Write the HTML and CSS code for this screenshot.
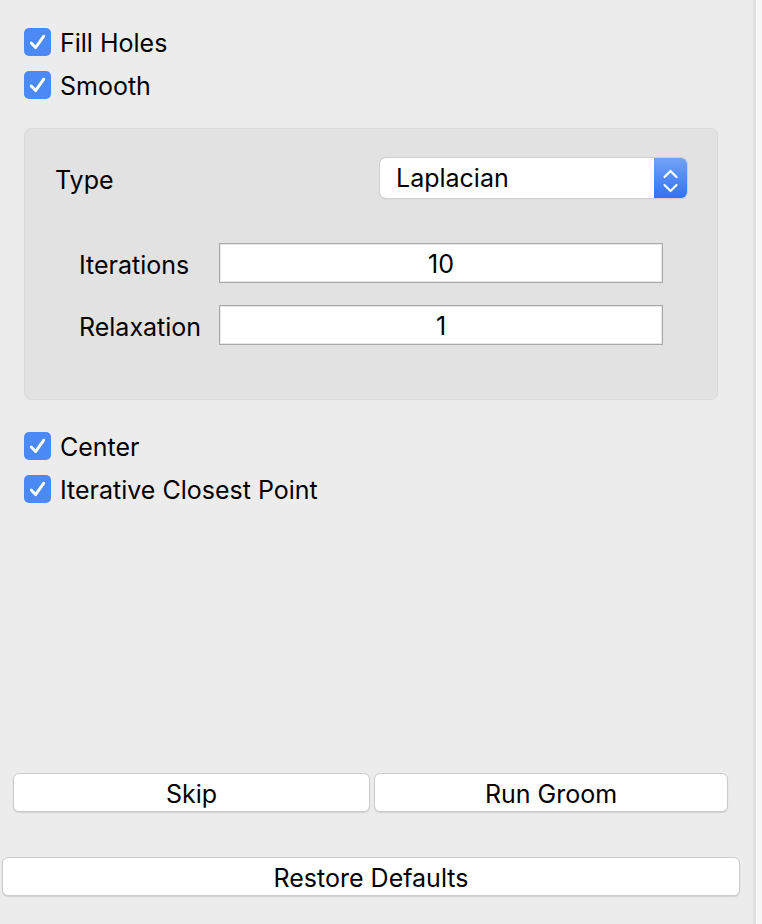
FILE: index.html
```html
<!DOCTYPE html>
<html>
<head>
<meta charset="utf-8">
<link rel="stylesheet" href="styles.css">
</head>
<body>
<div class="page">
  <div class="panel">
    <div class="checks top-checks">
      <label class="check"><span class="box"><svg viewBox="0 0 28 28" width="28" height="28"><path d="M7.5 15 L12 19.8 L20.5 8" /></svg></span><span class="lbl">Fill Holes</span></label>
      <label class="check"><span class="box"><svg viewBox="0 0 28 28" width="28" height="28"><path d="M7.5 15 L12 19.8 L20.5 8" /></svg></span><span class="lbl">Smooth</span></label>
    </div>

    <div class="group">
      <div class="type-row">
        <span class="type-lbl">Type</span>
        <div class="combo">
          <span class="combo-text">Laplacian</span>
          <span class="combo-arrow">
            <svg viewBox="0 0 33 40" width="33" height="40"><path d="M10.5 19 L16.5 13 L22.5 19" /><path d="M10.5 27 L16.5 33 L22.5 27" /></svg>
          </span>
        </div>
      </div>
      <div class="fields">
        <div class="field">
          <span class="field-lbl">Iterations</span>
          <div class="input">10</div>
        </div>
        <div class="field">
          <span class="field-lbl">Relaxation</span>
          <div class="input">1</div>
        </div>
      </div>
    </div>

    <div class="checks mid-checks">
      <label class="check"><span class="box"><svg viewBox="0 0 28 28" width="28" height="28"><path d="M7.5 15 L12 19.8 L20.5 8" /></svg></span><span class="lbl">Center</span></label>
      <label class="check"><span class="box"><svg viewBox="0 0 28 28" width="28" height="28"><path d="M7.5 15 L12 19.8 L20.5 8" /></svg></span><span class="lbl">Iterative Closest Point</span></label>
    </div>

    <div class="spacer"></div>

    <div class="btn-row">
      <button class="btn skip">Skip</button>
      <button class="btn run">Run Groom</button>
    </div>
    <div class="restore-row">
      <button class="btn restore">Restore Defaults</button>
    </div>
  </div>
  <div class="divider"></div>
  <div class="edge"></div>
</div>
</body>
</html>
```

FILE: styles.css
```css
* { box-sizing: border-box; }
html, body { margin: 0; padding: 0; }
body {
  font-family: "Inter", "Liberation Sans", sans-serif;
  font-size: 25px;
  color: #000;
  background: #ececec;
}
.page {
  display: flex;
  height: 924px;
  width: 762px;
}
.panel {
  width: 753px;
  background: #ececec;
  display: flex;
  flex-direction: column;
}
.divider { width: 3px; background: #e2e2e2; }
.edge { flex: 1; background: #f7f7f7; }

.checks {
  display: flex;
  flex-direction: column;
  gap: 15px;
  padding-left: 24px;
}
.top-checks { padding-top: 28px; }
.mid-checks { padding-top: 32px; }
.check {
  display: flex;
  align-items: center;
  height: 28px;
  gap: 9px;
}
.box {
  width: 27px;
  height: 28px;
  border-radius: 5px;
  background: #4b8af4;
  display: flex;
  align-items: center;
  justify-content: center;
}
.box svg path {
  fill: none;
  stroke: #fff;
  stroke-width: 3;
  stroke-linecap: round;
  stroke-linejoin: round;
}
.lbl { line-height: 28px; padding-top: 2px; }

.group {
  margin: 29px 0 0 24px;
  width: 694px;
  height: 272px;
  background: #e2e2e2;
  border: 1px solid #dadada;
  border-radius: 7px;
  padding: 29px 30px 0 30px;
}
.type-row {
  display: flex;
  align-items: center;
  justify-content: space-between;
  height: 40px;
}
.type-lbl { line-height: 36px; padding-top: 4px; }
.combo {
  width: 307px;
  height: 40px;
  background: #fff;
  border-radius: 6px;
  box-shadow: 0 0 0 1px #cfcfcf, 0 1px 1px rgba(0,0,0,0.18);
  display: flex;
  overflow: hidden;
}
.combo-text {
  flex: 1;
  padding-left: 16px;
  line-height: 40px;
}
.combo-arrow {
  width: 33px;
  height: 40px;
  background: linear-gradient(to bottom, #73a3f6, #2f72f4);
}
.combo-arrow svg { display: block; }
.combo-arrow path {
  fill: none;
  stroke: #fff;
  stroke-width: 2.2;
  stroke-linecap: round;
  stroke-linejoin: round;
}

.fields {
  margin-top: 45px;
  padding-left: 24px;
  display: flex;
  flex-direction: column;
  gap: 22px;
}
.field {
  display: flex;
  align-items: center;
  height: 40px;
}
.field-lbl { width: 140px; line-height: 36px; padding-top: 4px; }
.input {
  width: 444px;
  height: 40px;
  background: #fff;
  border: 1px solid #a9a9a9;
  box-shadow: inset 0 0 0 1px #e8e8e8;
  text-align: center;
  line-height: 40px;
}

.spacer { flex: 1; }

.btn {
  font-family: "Inter", "Liberation Sans", sans-serif;
  font-size: 25px;
  color: #000;
  background: #fff;
  border: 1px solid #cbcbcb;
  border-radius: 6px;
  height: 39px;
  padding: 2px 0 0 0;
  box-shadow: 0 1px 1px rgba(0,0,0,0.12);
}
.btn-row {
  display: flex;
  gap: 4px;
  padding-left: 13px;
}
.skip { width: 357px; }
.run { width: 354px; }
.restore-row {
  margin-top: 45px;
  padding-left: 2px;
  padding-bottom: 28px;
}
.restore { width: 738px; }
```
